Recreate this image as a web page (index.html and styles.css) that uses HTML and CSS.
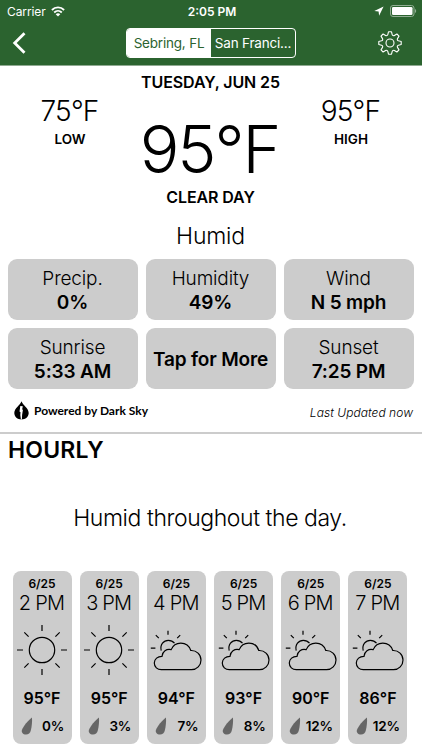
FILE: index.html
```
<!DOCTYPE html>
<html lang="en">
<head>
  <meta charset="utf-8">
  <title>Weather - Sebring, FL</title>
  <link rel="stylesheet" href="styles.css">
</head>
<body>
  <!-- Shared icons -->
  <svg class="sprite" width="0" height="0">
    <symbol id="sun" viewBox="0 0 52 52">
      <circle cx="26" cy="26" r="12.7"/>
      <path d="M26 1v6M26 45v6M1 26h6M45 26h6M8.300 8.300l4.300 4.300M39.400 39.400l4.300 4.300M8.300 43.700l4.300-4.300M39.400 12.600l4.300-4.300"/>
    </symbol>
    <symbol id="cloudy" viewBox="0 0 52 52">
      <path d="M18 6.800v4M5.800 11.200l3 3M30.200 11.200l-3 3M.8 24.200h4.600"/>
      <path d="M11.200 26.600C9.700 20.500 13.800 16.300 18.300 16.300c2.600 0 4.700 1 6.200 2.900"/>
      <path d="M11.300 45.700h30.200c5.300 0 9.500-4.300 9.500-9.700s-4.500-9.800-10.200-9.500c-1.500-4.600-5.300-7.400-10-7.400-4.400 0-8 2.500-9.600 6.500-4.600-1.200-8.900 1.900-9.200 6.700-4.200-.1-7.700 2.800-7.700 6.700s3.100 6.700 7 6.700z"/>
    </symbol>
    <symbol id="drop" viewBox="0 0 12 18">
      <path d="M11 .5c.3 3.500-.2 8.700-1.200 13-.6 2.500-2.300 4-4.800 4C1.900 17.500 0 15.200 1 12.700 2.500 9 7 3.500 11 .5z"/>
    </symbol>
  </svg>

  <header class="navbar">
    <div class="status">
      <div class="status-left">
        <span>Carrier</span>
        <svg class="wifi" width="14" height="11" viewBox="0 0 14 11">
          <path d="M.9 4C4.300.5 9.700.5 13.100 4M3.200 6.500c2.200-2.200 5.400-2.200 7.600 0"/>
          <path class="solid" d="M4.700 8.200c1.300-1.300 3.300-1.300 4.600 0L7 10.500z"/>
        </svg>
      </div>
      <span class="clock">2:05 PM</span>
      <div class="status-right">
        <svg width="10" height="10" viewBox="0 0 10 10"><path fill="#fff" d="M9.600.4.300 4.900l4.300.5.500 4.300z"/></svg>
        <svg width="27" height="12" viewBox="0 0 27 12">
          <rect class="battery-case" x=".5" y=".5" width="23.500" height="11" rx="2.500"/>
          <rect fill="#fff" x="2" y="2" width="20.500" height="8" rx="1.300"/>
          <path class="battery-tip" d="M25 4v4c1.600-.6 1.600-3.400 0-4z"/>
        </svg>
      </div>
    </div>
    <nav class="toolbar">
      <svg class="back" width="14" height="22" viewBox="0 0 14 22"><path d="M12.500 1.200 2.700 11l9.800 9.800"/></svg>
      <div class="segmented">
        <span class="segment active">Sebring, FL</span>
        <span class="segment">San Franci...</span>
      </div>
      <svg class="gear" width="24" height="24" viewBox="-12 -12 24 24">
        <path d="M-2.200-8.400-1.500-11.200H1.500L2.200-8.400A1.500 1.500 0 0 0 4.400-7.500L6.900-9 9-6.900 7.500-4.400A1.500 1.500 0 0 0 8.400-2.200L11.200-1.500V1.500L8.400 2.200A1.500 1.500 0 0 0 7.500 4.400L9 6.900 6.900 9 4.400 7.500A1.500 1.500 0 0 0 2.200 8.400L1.500 11.200H-1.500L-2.200 8.400A1.500 1.500 0 0 0-4.400 7.500L-6.900 9-9 6.900-7.500 4.400A1.500 1.500 0 0 0-8.400 2.200L-11.200 1.500V-1.500L-8.400-2.200A1.500 1.500 0 0 0-7.500-4.400L-9-6.900-6.900-9-4.400-7.500A1.500 1.500 0 0 0-2.200-8.400z"/>
        <circle r="4"/>
      </svg>
    </nav>
  </header>

  <main>
    <section class="current">
      <div class="side low">
        <div class="temp">75°F</div>
        <div class="label">LOW</div>
      </div>
      <div class="now">
        <div class="date">TUESDAY, JUN 25</div>
        <div class="big-temp">95°F</div>
        <div class="condition">CLEAR DAY</div>
        <div class="summary">Humid</div>
      </div>
      <div class="side high">
        <div class="temp">95°F</div>
        <div class="label">HIGH</div>
      </div>
    </section>

    <section class="tiles">
      <div class="tile"><span>Precip.</span><b>0%</b></div>
      <div class="tile"><span>Humidity</span><b>49%</b></div>
      <div class="tile"><span>Wind</span><b>N 5 mph</b></div>
      <div class="tile"><span>Sunrise</span><b>5:33 AM</b></div>
      <div class="tile"><b class="more">Tap for More</b></div>
      <div class="tile"><span>Sunset</span><b>7:25 PM</b></div>
    </section>

    <div class="credits">
      <div class="darksky">
        <svg width="15" height="19" viewBox="0 0 15 19">
          <path d="M7.500.3C8.500 4 14.700 7 14.700 12.100c0 3.700-3.200 6.500-7.200 6.500S.3 15.800.3 12.100C.3 7 6.500 4 7.500.3z"/>
          <path fill="#fff" d="M6.300 5 8.800 5.300 8.200 8.300 8.900 8.900 8.100 14 7.900 18.500H6.900L6.300 14 6.500 11.300 5.500 10.500z"/>
        </svg>
        <span>Powered by Dark Sky</span>
      </div>
      <span class="updated">Last Updated now</span>
    </div>

    <section class="hourly">
      <h2>HOURLY</h2>
      <p>Humid throughout the day.</p>
      <div class="hours">
        <div class="hour">
          <div class="day">6/25</div>
          <div class="time">2 PM</div>
          <svg class="icon"><use href="#sun"/></svg>
          <div class="degrees">95°F</div>
          <div class="rain"><svg class="drop"><use href="#drop"/></svg><span>0%</span></div>
        </div>
        <div class="hour">
          <div class="day">6/25</div>
          <div class="time">3 PM</div>
          <svg class="icon"><use href="#sun"/></svg>
          <div class="degrees">95°F</div>
          <div class="rain"><svg class="drop"><use href="#drop"/></svg><span>3%</span></div>
        </div>
        <div class="hour">
          <div class="day">6/25</div>
          <div class="time">4 PM</div>
          <svg class="icon"><use href="#cloudy"/></svg>
          <div class="degrees">94°F</div>
          <div class="rain"><svg class="drop"><use href="#drop"/></svg><span>7%</span></div>
        </div>
        <div class="hour">
          <div class="day">6/25</div>
          <div class="time">5 PM</div>
          <svg class="icon"><use href="#cloudy"/></svg>
          <div class="degrees">93°F</div>
          <div class="rain"><svg class="drop"><use href="#drop"/></svg><span>8%</span></div>
        </div>
        <div class="hour">
          <div class="day">6/25</div>
          <div class="time">6 PM</div>
          <svg class="icon"><use href="#cloudy"/></svg>
          <div class="degrees">90°F</div>
          <div class="rain"><svg class="drop"><use href="#drop"/></svg><span>12%</span></div>
        </div>
        <div class="hour">
          <div class="day">6/25</div>
          <div class="time">7 PM</div>
          <svg class="icon"><use href="#cloudy"/></svg>
          <div class="degrees">86°F</div>
          <div class="rain"><svg class="drop"><use href="#drop"/></svg><span>12%</span></div>
        </div>
      </div>
    </section>
  </main>
</body>
</html>
```
FILE: styles.css
```
* {
  box-sizing: border-box;
}

body {
  margin: 0;
  height: 750px;
  overflow: hidden;
  background: #fff;
  color: #000;
  font-family: Inter, "Liberation Sans", sans-serif;
  white-space: nowrap;
}

svg {
  display: block;
  flex: none;
}

.sprite {
  position: absolute;
}

/* Header */
.navbar {
  height: 66px;
  background: #2b632f;
  border-bottom: 1px solid #8fa991;
  color: #fff;
}

.status {
  display: grid;
  grid-template-columns: 1fr auto 1fr;
  align-items: center;
  height: 22px;
  padding: 0 5px 0 7px;
  font-size: 12px;
}

.status-left,
.status-right {
  display: flex;
  align-items: center;
  gap: 6px;
}

.status-left {
  gap: 5px;
  letter-spacing: -0.1px;
}

.status-right {
  justify-content: flex-end;
}

.wifi {
  fill: none;
  stroke: #fff;
  stroke-width: 1.8;
}

.wifi .solid {
  fill: #fff;
  stroke: none;
}

.clock {
  font-weight: 600;
}

.battery-case {
  fill: none;
  stroke: #91ae93;
}

.battery-tip {
  fill: #91ae93;
}

.toolbar {
  display: flex;
  align-items: center;
  justify-content: space-between;
  height: 42px;
  padding: 0 20px 0 12px;
}

.back {
  fill: none;
  stroke: #fff;
  stroke-width: 2.8;
}

.segmented {
  display: flex;
  width: 170px;
  height: 30px;
  margin-left: 18px;
  border: 1px solid #fff;
  border-radius: 4px;
  overflow: hidden;
}

.segment {
  flex: 1 1 0;
  font-size: 13.5px;
  letter-spacing: -0.2px;
  line-height: 29px;
  text-align: center;
}

.segment.active {
  background: #fff;
  color: #2b632f;
}

.gear {
  fill: none;
  stroke: #fff;
  stroke-width: 1.1;
  stroke-linejoin: round;
}

/* Current conditions */
.current {
  display: grid;
  grid-template-columns: 124px 1fr 124px;
  height: 193px;
  padding: 0 9px 0 8px;
  text-align: center;
}

.side {
  padding-top: 28px;
}

.temp {
  padding-right: 1px;
  font-size: 28px;
  font-weight: 300;
  letter-spacing: -0.8px;
  line-height: 35px;
}

.label {
  margin-top: 1px;
  font-size: 13.5px;
  font-weight: 600;
  line-height: 18px;
}

.date,
.condition {
  font-size: 16px;
  font-weight: 600;
  line-height: 20px;
}

.date {
  padding-top: 6px;
  letter-spacing: -0.1px;
}

.big-temp {
  margin-top: 17px;
  padding-right: 2px;
  height: 78px;
  font-size: 66px;
  font-weight: 300;
  letter-spacing: -2px;
  line-height: 80px;
}

.condition {
  letter-spacing: -0.1px;
}

.summary {
  margin-top: 14px;
  font-size: 23px;
  font-weight: 300;
  letter-spacing: -0.2px;
  line-height: 31px;
}

/* Detail tiles */
.tiles {
  display: grid;
  grid-template-columns: repeat(3, 1fr);
  grid-auto-rows: 61px;
  gap: 8px;
  padding: 0 8px;
}

.tile {
  display: flex;
  flex-direction: column;
  align-items: center;
  justify-content: center;
  padding: 2px 1px 0 0;
  border-radius: 9px;
  background: #ccc;
  font-size: 19px;
  font-weight: 300;
  letter-spacing: -0.15px;
  line-height: 24px;
}

.tile b {
  font-weight: 600;
}

.credits {
  display: flex;
  justify-content: space-between;
  height: 43px;
  padding: 12px 9px 0 14px;
}

.darksky {
  display: flex;
  gap: 5px;
  font-family: Lato, sans-serif;
  font-size: 12px;
  font-weight: 700;
  line-height: 19px;
}

.updated {
  font-size: 12px;
  font-style: italic;
  font-weight: 300;
  letter-spacing: 0.05px;
  line-height: 24px;
}

/* Hourly forecast */
.hourly {
  border-top: 2px solid #ccc;
}

.hourly h2 {
  margin: 0;
  padding-left: 8px;
  font-size: 23px;
  font-weight: 600;
  letter-spacing: 0.2px;
  line-height: 32px;
}

.hourly p {
  margin: 36px 0 37px;
  padding-right: 2px;
  font-size: 23px;
  font-weight: 300;
  letter-spacing: -0.43px;
  line-height: 32px;
  text-align: center;
}

.hours {
  display: flex;
  gap: 8.2px;
  padding-left: 12.5px;
}

.hour {
  display: flex;
  flex: none;
  flex-direction: column;
  align-items: center;
  width: 59px;
  height: 173px;
  padding-top: 4px;
  border-radius: 8px;
  background: #ccc;
}

.day {
  font-size: 12px;
  font-weight: 600;
  line-height: 17px;
}

.time {
  padding-right: 1px;
  font-size: 20px;
  font-weight: 300;
  letter-spacing: -0.8px;
  line-height: 23px;
}

.icon {
  width: 52px;
  height: 52px;
  margin-top: 9px;
  fill: none;
  stroke: #000;
  stroke-width: 1.2;
}

.degrees {
  margin-top: 11px;
  font-size: 16px;
  font-weight: 600;
  line-height: 22px;
}

.rain {
  display: flex;
  align-items: center;
  justify-content: space-between;
  width: 100%;
  margin-top: 8px;
  padding: 0 7.5px 0 8px;
  font-size: 13.5px;
  font-weight: 600;
  letter-spacing: -0.2px;
  line-height: 18px;
}

.drop {
  width: 12px;
  height: 18px;
  fill: #666;
}
```
